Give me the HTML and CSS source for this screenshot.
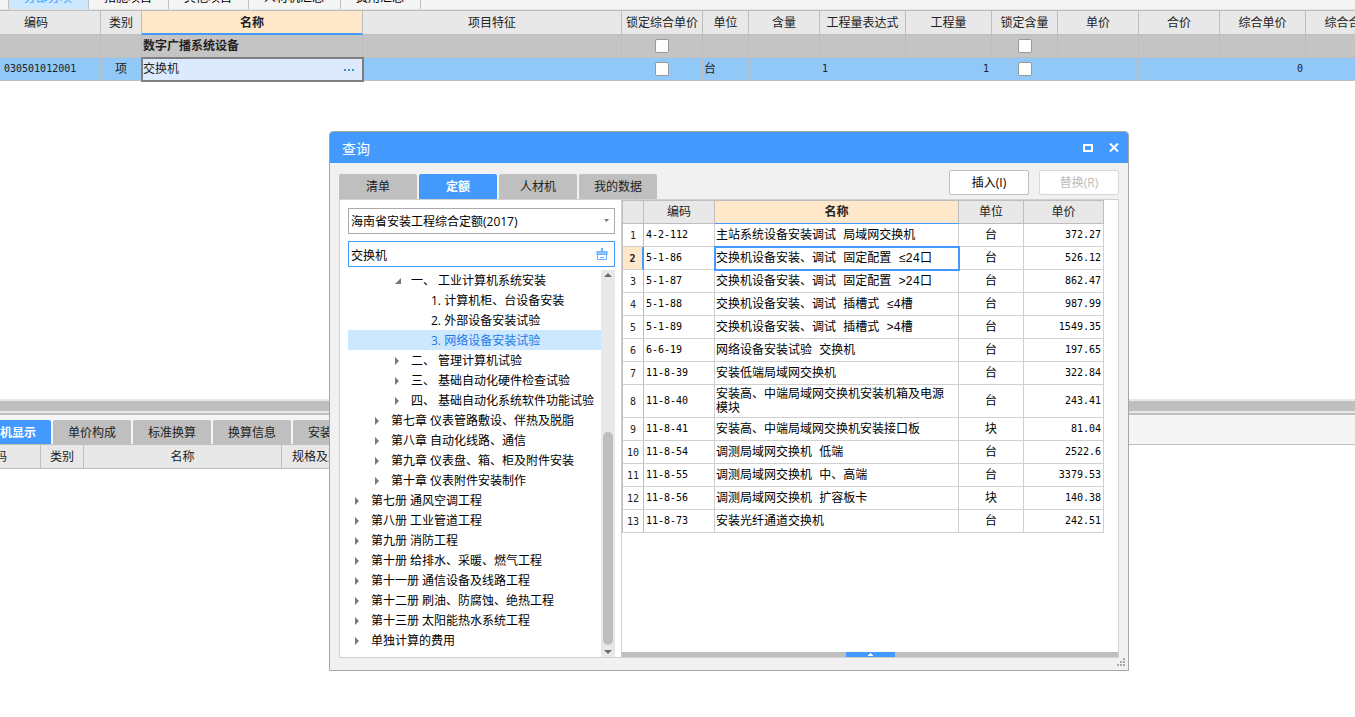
FILE: index.html
```html
<!DOCTYPE html>
<html lang="zh-CN">
<head>
<meta charset="utf-8">
<title>查询</title>
<link rel="stylesheet" href="styles.css">
</head>
<body>
<div class="app">
  <nav class="sheet-tabs">
    <button class="sheet-tab active">分部分项</button>
    <button class="sheet-tab">措施项目</button>
    <button class="sheet-tab">其他项目</button>
    <button class="sheet-tab">人材机汇总</button>
    <button class="sheet-tab">费用汇总</button>
  </nav>
  <main class="sheet">
    <table class="grid main-grid">
      <colgroup>
        <col class="w101"><col class="w41"><col class="w221"><col class="w259"><col class="w81"><col class="w46"><col class="w71"><col class="w86"><col class="w86"><col class="w66"><col class="w81"><col class="w81"><col class="w86"><col class="w86">
      </colgroup>
      <thead>
        <tr><th class="code-head">编码</th><th>类别</th><th class="current">名称</th><th>项目特征</th><th>锁定综合单价</th><th>单位</th><th>含量</th><th>工程量表达式</th><th>工程量</th><th>锁定含量</th><th>单价</th><th>合价</th><th>综合单价</th><th>综合合价</th></tr>
      </thead>
      <tbody>
        <tr class="group"><td></td><td></td><td class="group-name">数字广播系统设备</td><td></td><td class="center tick"><input type="checkbox" class="check" aria-label="锁定综合单价"></td><td></td><td></td><td></td><td></td><td class="center tick"><input type="checkbox" class="check" aria-label="锁定含量"></td><td></td><td></td><td></td><td></td></tr>
        <tr class="picked"><td class="num code">030501012001</td><td class="center">项</td><td class="editing"><div class="edit-box"><span>交换机</span><button class="more" aria-label="更多"><svg width="11" height="2" viewBox="0 0 11 2"><path d="M0 0h2v2H0zM4 0h2v2H4zM8 0h2v2H8z" fill="#3f8fd0"/></svg></button></div></td><td></td><td class="center tick"><input type="checkbox" class="check" aria-label="锁定综合单价"></td><td>台</td><td></td><td class="num">1</td><td class="num right">1</td><td class="center tick"><input type="checkbox" class="check" aria-label="锁定含量"></td><td></td><td></td><td class="num right">0</td><td></td></tr>
      </tbody>
    </table>
  </main>
  <section class="detail">
    <div class="splitter"></div>
    <nav class="detail-tabs">
      <button class="tab active wide">工料机显示</button>
      <button class="tab">单价构成</button>
      <button class="tab">标准换算</button>
      <button class="tab">换算信息</button>
      <button class="tab">安装费用</button>
    </nav>
    <table class="grid detail-grid">
      <colgroup><col class="w91"><col class="w43"><col class="w198"><col class="w81"></colgroup>
      <thead><tr><th>编码</th><th>类别</th><th>名称</th><th>规格及型号</th></tr></thead>
    </table>
  </section>
</div>

<div class="dialog" role="dialog" aria-labelledby="dialog-title">
  <header class="titlebar">
    <h1 id="dialog-title" class="title">查询</h1>
    <button class="win-button" aria-label="最大化"><svg width="10" height="8" viewBox="0 0 10 8"><path d="M1 1h8v6H1z" fill="none" stroke="#fff" stroke-width="2"/></svg></button>
    <button class="win-button" aria-label="关闭"><svg width="10" height="9" viewBox="0 0 10 9"><path d="M1 0.5l8 8M9 0.5l-8 8" fill="none" stroke="#fff" stroke-width="2"/></svg></button>
  </header>
  <div class="toolbar">
    <nav class="dialog-tabs">
      <button class="tab">清单</button>
      <button class="tab active">定额</button>
      <button class="tab">人材机</button>
      <button class="tab">我的数据</button>
    </nav>
    <div class="actions">
      <button class="action">插入(I)</button>
      <button class="action" disabled>替换(R)</button>
    </div>
  </div>
  <div class="panes">
    <aside class="left-pane">
      <div class="field">
        <select class="control" aria-label="定额库"><option>海南省安装工程综合定额(2017)</option></select>
        <svg class="caret" width="5" height="3" viewBox="0 0 5 3"><path d="M0 0h5L2.500 3z" fill="#777"/></svg>
      </div>
      <div class="field">
        <input class="control search" type="text" value="交换机" aria-label="搜索">
        <button class="clear" aria-label="清除"><svg width="12" height="12" viewBox="0 0 12 12"><path d="M5 0h2v3h4.500v4H.5V3H5z" fill="#6cb0ff"/><path d="M2 5h8" stroke="#b8d8ff"/><path d="M1.500 7v4.500h9V7M4 9.500h4" fill="none" stroke="#6cb0ff"/></svg></button>
      </div>
      <div class="tree-area">
        <ul class="tree">
          <li class="node l2 open">一、 工业计算机系统安装</li>
          <li class="node l3 leaf">1. 计算机柜、台设备安装</li>
          <li class="node l3 leaf">2. 外部设备安装试验</li>
          <li class="node l3 leaf chosen">3. 网络设备安装试验</li>
          <li class="node l2">二、 管理计算机试验</li>
          <li class="node l2">三、 基础自动化硬件检查试验</li>
          <li class="node l2">四、 基础自动化系统软件功能试验</li>
          <li class="node l1">第七章 仪表管路敷设、伴热及脱脂</li>
          <li class="node l1">第八章 自动化线路、通信</li>
          <li class="node l1">第九章 仪表盘、箱、柜及附件安装</li>
          <li class="node l1">第十章 仪表附件安装制作</li>
          <li class="node">第七册 通风空调工程</li>
          <li class="node">第八册 工业管道工程</li>
          <li class="node">第九册 消防工程</li>
          <li class="node">第十册 给排水、采暖、燃气工程</li>
          <li class="node">第十一册 通信设备及线路工程</li>
          <li class="node">第十二册 刷油、防腐蚀、绝热工程</li>
          <li class="node">第十三册 太阳能热水系统工程</li>
          <li class="node">单独计算的费用</li>
        </ul>
        <div class="scrollbar">
          <svg width="8" height="4" viewBox="0 0 8 4"><path d="M0 4h8L4 0z" fill="#6b6b76"/></svg>
          <div class="thumb"></div>
          <svg width="8" height="4" viewBox="0 0 8 4"><path d="M0 0h8L4 4z" fill="#6b6b76"/></svg>
        </div>
      </div>
    </aside>
    <section class="right-pane">
      <div class="results">
        <table class="grid result-grid">
          <colgroup><col class="w22"><col class="w71"><col class="w244"><col class="w65"><col class="w80"></colgroup>
          <thead><tr><th></th><th>编码</th><th class="current">名称</th><th>单位</th><th>单价</th></tr></thead>
          <tbody>
            <tr><th>1</th><td class="num">4-2-112</td><td>主站系统设备安装调试 局域网交换机</td><td class="center">台</td><td class="num right">372.27</td></tr>
            <tr class="active-row"><th>2</th><td class="num">5-1-86</td><td class="focus">交换机设备安装、调试 固定配置 ≤24口</td><td class="center">台</td><td class="num right">526.12</td></tr>
            <tr><th>3</th><td class="num">5-1-87</td><td>交换机设备安装、调试 固定配置 &gt;24口</td><td class="center">台</td><td class="num right">862.47</td></tr>
            <tr><th>4</th><td class="num">5-1-88</td><td>交换机设备安装、调试 插槽式 ≤4槽</td><td class="center">台</td><td class="num right">987.99</td></tr>
            <tr><th>5</th><td class="num">5-1-89</td><td>交换机设备安装、调试 插槽式 &gt;4槽</td><td class="center">台</td><td class="num right">1549.35</td></tr>
            <tr><th>6</th><td class="num">6-6-19</td><td>网络设备安装试验 交换机</td><td class="center">台</td><td class="num right">197.65</td></tr>
            <tr><th>7</th><td class="num">11-8-39</td><td>安装低端局域网交换机</td><td class="center">台</td><td class="num right">322.84</td></tr>
            <tr class="two-line"><th>8</th><td class="num">11-8-40</td><td>安装高、中端局域网交换机安装机箱及电源模块</td><td class="center">台</td><td class="num right">243.41</td></tr>
            <tr><th>9</th><td class="num">11-8-41</td><td>安装高、中端局域网交换机安装接口板</td><td class="center">块</td><td class="num right">81.04</td></tr>
            <tr><th>10</th><td class="num">11-8-54</td><td>调测局域网交换机 低端</td><td class="center">台</td><td class="num right">2522.6</td></tr>
            <tr><th>11</th><td class="num">11-8-55</td><td>调测局域网交换机 中、高端</td><td class="center">台</td><td class="num right">3379.53</td></tr>
            <tr><th>12</th><td class="num">11-8-56</td><td>调测局域网交换机 扩容板卡</td><td class="center">块</td><td class="num right">140.38</td></tr>
            <tr><th>13</th><td class="num">11-8-73</td><td>安装光纤通道交换机</td><td class="center">台</td><td class="num right">242.51</td></tr>
          </tbody>
        </table>
      </div>
      <div class="drawer-bar"><button class="drawer-handle" aria-label="展开"><svg width="5" height="3" viewBox="0 0 5 3"><path d="M2 0h1v1h1v1h1v1H0V2h1V1h1z" fill="#fff"/></svg></button></div>
    </section>
  </div>
  <footer class="dialog-foot"><svg width="8" height="8" viewBox="0 0 8 8"><path d="M6 0h2v2H6zM3 3h2v2H3zM6 3h2v2H6zM0 6h2v2H0zM3 6h2v2H3zM6 6h2v2H6z" fill="#aaa"/></svg></footer>
</div>
</body>
</html>
```
FILE: styles.css
```css
* { box-sizing: border-box; }

body {
  margin: 0;
  background: #fff;
  color: #000;
  font-family: "Open Sans", "Noto Sans CJK SC", sans-serif;
  font-size: 12px;
  line-height: 16px;
  overflow: hidden;
}

button, input, select { font: inherit; color: inherit; }
button { padding: 0; border: 0; background: none; white-space: nowrap; }
svg { display: block; }

.app { display: flex; flex-direction: column; height: 100vh; overflow: hidden; }

/* sheet tabs, scrolled partly out of the window */
.sheet-tabs {
  display: flex;
  flex: none;
  height: 10px;
  padding-left: 8px;
  align-items: flex-end;
  overflow: hidden;
  background: #f5f5f5;
  border-bottom: 1px solid #e2e2e2;
}
.sheet-tab {
  flex: none;
  height: 22px;
  padding: 0 16px 0 15px;
  border-right: 1px solid #c0c0c0;
}
.sheet-tab.active {
  border-left: 1px solid #c0c0c0;
  background: #cce8ff;
  color: #4499ff;
}

.sheet { flex: 1; min-height: 0; overflow: hidden; }

/* grids */
.grid {
  table-layout: fixed;
  border-collapse: separate;
  border-spacing: 0;
  font-family: "Liberation Mono", "Noto Sans CJK SC", monospace;
  line-height: 14px;
}
.grid th, .grid td {
  height: 23px;
  padding: 2px 6px 0 1px;
  border-right: 1px solid #d0d0d0;
  border-bottom: 1px solid #d0d0d0;
  text-align: left;
}
.grid thead th {
  padding: 2px 0 0;
  border-color: #bebebe;
  background: #e8e8e8;
  color: #222;
  font-weight: normal;
  text-align: center;
  white-space: nowrap;
  overflow: hidden;
}
.grid thead th.current { background: #ffe7ca; font-weight: bold; }
.grid .num { padding: 0 2px; font-family: "DejaVu Sans Mono", monospace; font-size: 10px; }
.grid .center { padding: 2px 0 0; text-align: center; }
.grid .tick { padding: 0; }
.grid .right { text-align: right; }

.w22 { width: 22px; } .w41 { width: 41px; } .w43 { width: 43px; }
.w46 { width: 46px; } .w65 { width: 65px; } .w66 { width: 66px; }
.w71 { width: 71px; } .w80 { width: 80px; } .w81 { width: 81px; }
.w86 { width: 86px; } .w91 { width: 91px; } .w101 { width: 101px; }
.w198 { width: 198px; } .w221 { width: 221px; } .w244 { width: 244px; }
.w259 { width: 259px; }

.main-grid { width: 1392px; border-top: 1px solid #bebebe; color: #222; }
.main-grid thead th { height: 24px; }
.main-grid thead th.code-head { padding-right: 28px; }
.main-grid thead th.current { padding-top: 3px; border-bottom: 2px solid #4499ff; }
.main-grid td { border-color: #bebebe; }
.main-grid .group td { background: #c4c4c4; }
.main-grid .group .group-name { font-weight: bold; }
.main-grid .picked td { background: #91c8f7; }
.main-grid .code { padding-left: 4px; }
.main-grid .picked .editing { padding: 0; background: #dde9fd; outline: 2px solid #7f7f7f; outline-offset: -1px; }
.edit-box { display: flex; align-items: center; justify-content: space-between; padding: 2px 7px 0 1px; }
.more { padding: 4px 0; }

.check {
  display: block;
  appearance: none;
  width: 14px;
  height: 14px;
  margin: 0 auto;
  border: 1px solid #999;
  border-radius: 2px;
  background: #fff;
}

/* lower pane */
.detail { flex: none; height: 318px; overflow: hidden; }
.splitter {
  height: 16px;
  border-top: 2px solid #e8e8e8;
  border-bottom: 2px solid #bfbfbf;
  background: linear-gradient(#bfbfbf 10px, #e8e8e8 10px);
}
.detail-tabs {
  display: flex;
  gap: 2px;
  height: 30px;
  padding-top: 5px;
  margin-left: -39px;
  background: #f5f5f5;
  border-bottom: 1px solid #bfbfbf;
}
.tab {
  flex: none;
  width: 78px;
  height: 25px;
  padding-top: 1px;
  border-radius: 2px 2px 0 0;
  background: #bfbfbf;
  color: #222;
}
.detail-tabs .tab { height: 24px; }
.tab.wide { width: 90px; }
.tab.active { background: #4499ff; color: #fff; font-weight: bold; }
.detail-grid { width: 413px; margin-left: -50px; }
.detail-grid thead th { height: 24px; }

/* query window */
.dialog {
  position: absolute;
  left: 329px;
  top: 131px;
  display: flex;
  flex-direction: column;
  width: 800px;
  height: 540px;
  border: 1px solid #a5a5a5;
  border-radius: 4px 4px 0 0;
  background: #f1f1f1;
  overflow: hidden;
}
.titlebar {
  display: flex;
  flex: none;
  align-items: center;
  gap: 16px;
  height: 31px;
  padding: 0 9px 0 12px;
  background: #4499ff;
  color: #fff;
}
.title { flex: 1; margin: 0; padding-top: 2px; font-size: 14px; font-weight: normal; line-height: 20px; }
.toolbar { display: flex; flex: none; justify-content: space-between; height: 36px; padding: 0 9px; }
.dialog-tabs { display: flex; gap: 2px; align-items: flex-end; }
.actions { display: flex; gap: 10px; padding-top: 7px; }
.action {
  width: 80px;
  height: 25px;
  border: 1px solid #bfbfbf;
  border-radius: 2px;
  background: #fff;
}
.action:disabled { border-color: #d8d8d8; color: #bbb; }

.panes {
  display: flex;
  flex: 1;
  min-height: 0;
  margin: 0 9px;
  border: 1px solid #d0d0d0;
  background: #fff;
}
.left-pane { display: flex; flex: none; flex-direction: column; width: 281px; padding: 8px 6px 0 8px; }
.field { position: relative; flex: none; height: 26px; margin-bottom: 7px; }
.control {
  display: block;
  appearance: none;
  width: 100%;
  height: 26px;
  padding: 2px 24px 0 2px;
  border: 1px solid #ababab;
  border-radius: 0;
  background: #fff;
  outline: 0;
}
.control.search { border-color: #4499ff; }
.caret { position: absolute; right: 6px; top: 11px; }
.clear { position: absolute; right: 7px; top: 7px; }
.tree-area { display: flex; flex: 1; min-height: 0; margin-top: -4px; }
.tree { flex: 1; margin: 0; padding: 0; list-style: none; overflow: hidden; }
.node { display: flex; align-items: center; height: 20px; padding: 2px 0 0 7px; line-height: 18px; white-space: pre; }
.node::before {
  content: "";
  width: 4px;
  height: 8px;
  margin-right: 12px;
  background: #777;
  clip-path: polygon(0 0, 100% 50%, 0 100%);
}
.node.l1 { padding-left: 27px; }
.node.l2 { padding-left: 47px; }
.node.l3 { padding-left: 67px; }
.node.open::before { width: 6px; height: 6px; margin-right: 10px; clip-path: polygon(100% 0, 100% 100%, 0 100%); }
.node.leaf::before { background: none; }
.node.chosen { background: #cce8ff; color: #1f78e8; }
.scrollbar {
  display: flex;
  flex-direction: column;
  align-items: center;
  flex: none;
  width: 14px;
  padding: 3px 0;
  background: #e8e8e8;
}
.thumb { width: 10px; height: 213px; margin: auto 0 5px; border-radius: 5px; background: #bfbfbf; }

.right-pane { display: flex; flex: 1; flex-direction: column; min-width: 0; border-left: 1px solid #d0d0d0; }
.results { flex: 1; min-height: 0; overflow: hidden; }
.result-grid { width: 482px; }
.result-grid thead th { height: 24px; border-top: 1px solid #bebebe; }
.result-grid thead th.current { border-bottom-color: #4499ff; }
.result-grid th:first-child { border-left: 1px solid #bebebe; border-right-color: #bebebe; }
.result-grid tbody th {
  padding: 1px 0 0;
  font-family: "DejaVu Sans Mono", monospace;
  font-size: 10px;
  font-weight: normal;
  text-align: center;
  color: #222;
}
.result-grid .two-line td { height: 33px; }
.result-grid .active-row th { background: #ffe7ca; font-weight: bold; border-right: 2px solid #4499ff; }
.result-grid .focus { outline: 2px solid #4499ff; outline-offset: -1px; }
.drawer-bar { display: flex; flex: none; justify-content: center; height: 5px; background: #bfbfbf; }
.drawer-handle { display: flex; align-items: center; justify-content: center; width: 49px; height: 5px; background: #4499ff; }
.dialog-foot { display: flex; flex: none; justify-content: flex-end; height: 12px; padding: 0 3px 0 0; }
```
